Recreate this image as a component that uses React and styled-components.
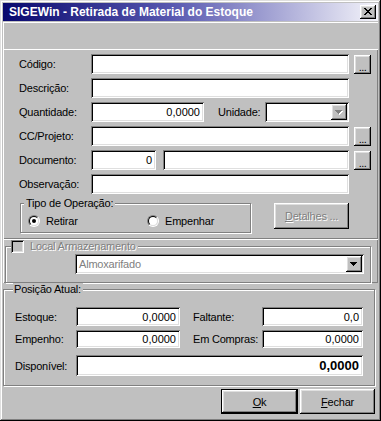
import React from 'react';
import styled, { createGlobalStyle, css } from 'styled-components';

const FACE = '#c0c0c0';

const Global = createGlobalStyle`
  html, body { margin: 0; padding: 0; background: ${FACE}; }
  body { font-family: "Liberation Sans", Arial, sans-serif; font-size: 11px; color: #000; }
  *, *::before, *::after { box-sizing: border-box; }
`;

const raised = css`
  box-shadow: inset -1px -1px #000, inset 1px 1px #fff, inset -2px -2px #808080, inset 2px 2px #dfdfdf;
`;
const sunken = css`
  box-shadow: inset 1px 1px #808080, inset -1px -1px #fff, inset 2px 2px #000, inset -2px -2px #dfdfdf;
`;

const Window = styled.div`
  width: 381px;
  height: 421px;
  background: ${FACE};
  padding: 3px;
  box-shadow: inset -1px -1px #000, inset 1px 1px #dfdfdf, inset -2px -2px #808080, inset 2px 2px #fff;
  display: flex;
  flex-direction: column;
`;

const TitleBar = styled.div`
  flex: none;
  height: 18px;
  background: linear-gradient(90deg, #08086e 0%, #5858b0 45%, #f4f4fa 100%);
  display: flex;
  align-items: center;
  padding: 0 2px 0 6px;
  color: #fff;
  font-weight: bold;
  font-size: 12px;
`;

const TitleText = styled.span`
  flex: 1;
  white-space: nowrap;
`;

const CloseBtn = styled.div`
  width: 16px;
  height: 14px;
  background: ${FACE};
  ${raised};
  display: flex;
  align-items: center;
  justify-content: center;
  padding-bottom: 1px;
`;

const Toolbar = styled.div`
  flex: none;
  height: 27px;
  margin-top: 1px;
  box-shadow: inset 1px 1px #fff;
`;

const FormPanel = styled.div`
  flex: none;
  height: 190px;
  box-shadow: inset 1px 1px #fff, inset -1px -1px #808080;
  padding: 5px 7px 0 16px;
  display: flex;
  flex-direction: column;
  gap: 4px;
`;

const Row = styled.div`
  display: flex;
  align-items: center;
  height: ${p => p.$h || 20}px;
  margin-top: ${p => p.$mt || 0}px;
`;

const Label = styled.span`
  flex: none;
  width: ${p => p.$w}px;
  margin-left: ${p => p.$ml || 0}px;
  white-space: nowrap;
  letter-spacing: -0.2px;
`;

const Field = styled.div`
  flex: ${p => (p.$w ? 'none' : '1')};
  width: ${p => (p.$w ? `${p.$w}px` : 'auto')};
  height: ${p => p.$h || 20}px;
  margin-left: ${p => p.$ml || 0}px;
  margin-right: ${p => p.$mr || 0}px;
  background: #fff;
  ${sunken};
  display: flex;
  align-items: center;
  justify-content: ${p => (p.$right ? 'flex-end' : 'flex-start')};
  padding: 0 4px;
  font-size: ${p => (p.$bold ? 13 : 11)}px;
  font-weight: ${p => (p.$bold ? 'bold' : 'normal')};
  color: ${p => (p.$dim ? '#808080' : '#000')};
  white-space: nowrap;
`;

const DotsBtn = styled.div`
  flex: none;
  width: 17px;
  height: 19px;
  margin-left: 5px;
  background: ${FACE};
  ${raised};
  display: flex;
  align-items: flex-end;
  justify-content: center;
  padding-bottom: 3px;
  font-size: 11px;
  line-height: 8px;
  letter-spacing: -0.5px;
`;

const ComboField = styled(Field)`
  padding: 2px;
  justify-content: space-between;
`;

const ComboText = styled.span`
  padding-left: 2px;
  letter-spacing: -0.2px;
`;

const ComboBtn = styled.div`
  flex: none;
  width: 16px;
  height: 16px;
  background: ${FACE};
  ${raised};
  display: flex;
  align-items: center;
  justify-content: center;
`;

const OpRow = styled.div`
  display: flex;
  align-items: flex-start;
  margin-top: -1px;
`;

const GroupBox = styled.fieldset`
  margin: 0 ${p => p.$mr || 0}px 0 ${p => p.$ml || 0}px;
  padding: 0;
  min-width: 0;
  width: ${p => (p.$w ? `${p.$w}px` : 'auto')};
  flex: ${p => (p.$w ? 'none' : '1')};
  border: 1px solid #808080;
  box-shadow: inset 1px 1px #fff, 1px 1px #fff;
`;

const Legend = styled.legend`
  margin-left: ${p => p.$ml || 3}px;
  padding: 0 2px 0 ${p => (p.$pl === undefined ? 2 : p.$pl)}px;
  background: ${FACE};
  line-height: 13px;
  height: 13px;
  font-size: 11px;
  display: flex;
  align-items: center;
  white-space: nowrap;
  letter-spacing: -0.2px;
`;

const RadioRow = styled.div`
  display: flex;
  align-items: center;
  height: 14px;
  margin: 4px 0 4px 7px;
`;

const RadioItem = styled.label`
  display: flex;
  align-items: center;
  width: ${p => (p.$w ? `${p.$w}px` : 'auto')};
  letter-spacing: -0.2px;
`;

const RadioCircle = styled.span`
  position: relative;
  flex: none;
  width: 12px;
  height: 12px;
  border-radius: 50%;
  border: 1px solid;
  border-color: #808080 #fff #fff #808080;
  margin-right: 6px;
  &::before {
    content: '';
    position: absolute;
    inset: 0;
    border-radius: 50%;
    border: 1px solid;
    border-color: #000 #dfdfdf #dfdfdf #000;
    background: #fff;
  }
  &::after {
    content: '';
    position: absolute;
    left: 3px;
    top: 3px;
    width: 4px;
    height: 4px;
    border-radius: 50%;
    background: #000;
    display: ${p => (p.$on ? 'block' : 'none')};
  }
`;

const PushButton = styled.div`
  flex: none;
  width: ${p => p.$w}px;
  height: ${p => p.$h || 25}px;
  margin-top: ${p => p.$mt || 0}px;
  margin-left: ${p => p.$ml || 0}px;
  background: ${FACE};
  display: flex;
  align-items: center;
  justify-content: center;
  font-size: 11px;
  letter-spacing: -0.2px;
  color: ${p => (p.$disabled ? '#808080' : '#000')};
  text-shadow: ${p => (p.$disabled ? '1px 1px 0 #fff' : 'none')};
  ${p =>
    p.$default
      ? css`
          border: 1px solid #000;
          box-shadow: inset -1px -1px #000, inset 1px 1px #fff, inset -2px -2px #808080, inset 2px 2px #dfdfdf;
        `
      : raised};
`;

const LocalPanel = styled.div`
  flex: none;
  height: 44px;
  box-shadow: inset 1px 1px #fff, inset -1px -1px #808080;
  padding: 1px 7px 0 2px;
  display: flex;
`;

const CheckBox = styled.span`
  flex: none;
  width: 13px;
  height: 13px;
  background: ${FACE};
  ${sunken};
`;

const DimText = styled.span`
  margin-left: 6px;
  color: #808080;
  text-shadow: 1px 1px 0 #fff;
`;

const ComboRow = styled.div`
  display: flex;
  margin: 1px 6px 6px 69px;
`;

const PosSection = styled.div`
  flex: none;
  height: 103px;
  display: flex;
  padding-right: 3px;
`;

const PosGrid = styled.div`
  padding: 0 0 8px 11px;
  display: flex;
  flex-direction: column;
`;

const ButtonBar = styled.div`
  flex: 1;
  display: flex;
  justify-content: flex-end;
  align-items: flex-start;
  padding: 3px 3px 0 0;
  gap: 2px;
`;

const Arrow = ({ disabled }) => (
  <svg width="8" height="5" viewBox="0 0 8 5" shapeRendering="crispEdges">
    {disabled && (
      <path d="M1 1H8V2H7V3H6V4H5V5H4V4H3V3H2V2H1Z" fill="#fff" />
    )}
    <path
      d="M0 0H7V1H6V2H5V3H4V4H3V3H2V2H1V1H0Z"
      fill={disabled ? '#808080' : '#000'}
    />
  </svg>
);

const CloseX = () => (
  <svg width="8" height="7" viewBox="0 0 8 7" shapeRendering="crispEdges">
    <path
      d="M0 0H2V1H3V2H5V1H6V0H8V1H7V2H6V3H5V4H6V5H7V6H8V7H6V6H5V5H3V6H2V7H0V6H1V5H2V4H3V3H2V2H1V1H0Z"
      fill="#000"
    />
  </svg>
);

export default function App() {
  return (
    <>
      <Global />
      <Window>
        <TitleBar>
          <TitleText>SIGEWin - Retirada de Material do Estoque</TitleText>
          <CloseBtn>
            <CloseX />
          </CloseBtn>
        </TitleBar>
        <Toolbar />
        <FormPanel>
          <Row>
            <Label $w={72}>Código:</Label>
            <Field />
            <DotsBtn>...</DotsBtn>
          </Row>
          <Row>
            <Label $w={72}>Descrição:</Label>
            <Field $mr={22} />
          </Row>
          <Row>
            <Label $w={72}>Quantidade:</Label>
            <Field $w={113} $right>0,0000</Field>
            <Label $w={47} $ml={14}>Unidade:</Label>
            <ComboField $w={84} $mr={22}>
              <ComboText />
              <ComboBtn>
                <Arrow disabled />
              </ComboBtn>
            </ComboField>
          </Row>
          <Row>
            <Label $w={72}>CC/Projeto:</Label>
            <Field />
            <DotsBtn>...</DotsBtn>
          </Row>
          <Row>
            <Label $w={72}>Documento:</Label>
            <Field $w={65} $right>0</Field>
            <Field $ml={7} />
            <DotsBtn>...</DotsBtn>
          </Row>
          <Row>
            <Label $w={72}>Observação:</Label>
            <Field $mr={22} />
          </Row>
          <OpRow>
            <GroupBox $w={231} $ml={1}>
              <Legend>Tipo de Operação:</Legend>
              <RadioRow>
                <RadioItem $w={119}>
                  <RadioCircle $on />
                  Retirar
                </RadioItem>
                <RadioItem>
                  <RadioCircle />
                  Empenhar
                </RadioItem>
              </RadioRow>
            </GroupBox>
            <PushButton $w={75} $h={26} $mt={6} $ml={23} $disabled>
              <span>
                <u>D</u>etalhes ...
              </span>
            </PushButton>
          </OpRow>
        </FormPanel>
        <LocalPanel>
          <GroupBox>
            <Legend $ml={5} $pl={0}>
              <CheckBox />
              <DimText>Local Armazenamento</DimText>
            </Legend>
            <ComboRow>
              <ComboField $dim>
                <ComboText>Almoxarifado</ComboText>
                <ComboBtn>
                  <Arrow />
                </ComboBtn>
              </ComboField>
            </ComboRow>
          </GroupBox>
        </LocalPanel>
        <PosSection>
          <GroupBox>
            <Legend $ml={9} $pl={1}>Posição Atual:</Legend>
            <PosGrid>
              <Row $h={19} $mt={11}>
                <Label $w={61}>Estoque:</Label>
                <Field $w={104} $h={19} $right>0,0000</Field>
                <Label $w={69} $ml={13}>Faltante:</Label>
                <Field $w={101} $h={19} $right>0,0</Field>
              </Row>
              <Row $h={18} $mt={4}>
                <Label $w={61}>Empenho:</Label>
                <Field $w={104} $h={18} $right>0,0000</Field>
                <Label $w={69} $ml={13}>Em Compras:</Label>
                <Field $w={101} $h={18} $right>0,0000</Field>
              </Row>
              <Row $h={21} $mt={7}>
                <Label $w={61}>Disponível:</Label>
                <Field $w={287} $h={21} $right $bold>0,0000</Field>
              </Row>
            </PosGrid>
          </GroupBox>
        </PosSection>
        <ButtonBar>
          <PushButton $w={77} $default>
            <span>
              <u>O</u>k
            </span>
          </PushButton>
          <PushButton $w={75}>
            <span>
              <u>F</u>echar
            </span>
          </PushButton>
        </ButtonBar>
      </Window>
    </>
  );
}
